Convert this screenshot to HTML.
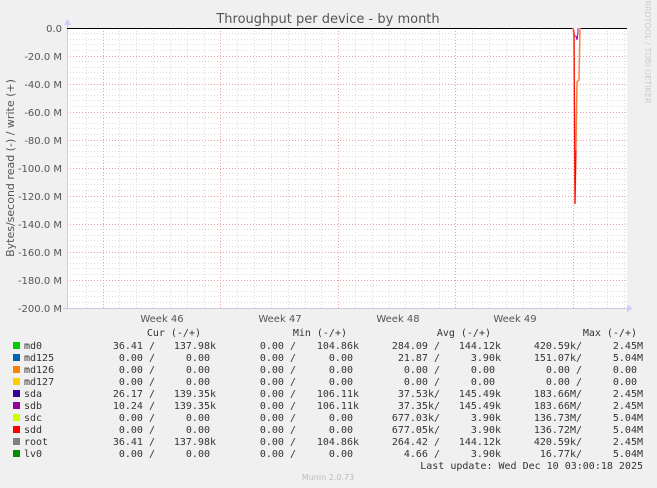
<!DOCTYPE html>
<html><head><style>
html,body{margin:0;padding:0;background:#f0f0f0;}
svg{display:block;}
text{font-family:"DejaVu Sans Mono","Liberation Mono",monospace;font-size:10px;fill:#333;}
.s{font-family:"DejaVu Sans","Liberation Sans",sans-serif;fill:#555;}
</style></head><body>
<svg width="657" height="488" xmlns="http://www.w3.org/2000/svg">
<rect width="657" height="488" fill="#f0f0f0"/>
<rect x="67" y="28" width="560" height="280" fill="#fff"/>
<g stroke="#ddd" stroke-dasharray="1,2" stroke-width="1">
<path d="M67 33.5H627M67 39.5H627M67 44.5H627M67 50.5H627M67 61.5H627M67 67.5H627M67 72.5H627M67 78.5H627M67 89.5H627M67 95.5H627M67 100.5H627M67 106.5H627M67 117.5H627M67 123.5H627M67 128.5H627M67 134.5H627M67 145.5H627M67 151.5H627M67 156.5H627M67 162.5H627M67 173.5H627M67 179.5H627M67 184.5H627M67 190.5H627M67 201.5H627M67 207.5H627M67 212.5H627M67 218.5H627M67 229.5H627M67 235.5H627M67 240.5H627M67 246.5H627M67 257.5H627M67 263.5H627M67 268.5H627M67 274.5H627M67 285.5H627M67 291.5H627M67 296.5H627M67 302.5H627"/>
<path d="M86.5 28V308M103.5 28V308M119.5 28V308M136.5 28V308M153.5 28V308M170.5 28V308M187.5 28V308M204.5 28V308M237.5 28V308M254.5 28V308M271.5 28V308M288.5 28V308M305.5 28V308M321.5 28V308M355.5 28V308M372.5 28V308M389.5 28V308M405.5 28V308M422.5 28V308M439.5 28V308M472.5 28V308M489.5 28V308M506.5 28V308M523.5 28V308M540.5 28V308M557.5 28V308M590.5 28V308M607.5 28V308M624.5 28V308"/>
</g>
<g stroke="#f0a0a0" stroke-dasharray="1,2" stroke-width="1">
<path d="M67 56.5H627M67 84.5H627M67 112.5H627M67 140.5H627M67 168.5H627M67 196.5H627M67 224.5H627M67 252.5H627M67 280.5H627"/>
<path d="M103.5 28V308M220.5 28V308M338.5 28V308M455.5 28V308M573.5 28V308"/>
</g>
<path d="M67.5 24V308M63 308.5H631" stroke="#ccd" stroke-width="1"/>
<path d="M64 25L67.5 19L71 25Z" fill="#ccf"/>
<path d="M627 305L633 308.5L627 312Z" fill="#ccf"/>
<path d="M67 28.5H574M580 28.5H627" stroke="#000" stroke-width="1"/>
<path d="M573 28L574 36L576 36L577 40L578 33L578 28" stroke="#990099" fill="none" stroke-width="1"/>
<path d="M573 28L574 34L575 204L577 82L579 80L580 28" stroke="#ff8040" fill="none" stroke-width="1.5"/>
<path d="M574 30L575 204L576 150" stroke="#ff0000" fill="none" stroke-width="1"/>
<text x="62" y="32" text-anchor="end" class="s">0.0</text>
<text x="62" y="60" text-anchor="end" class="s">-20.0 M</text>
<text x="62" y="88" text-anchor="end" class="s">-40.0 M</text>
<text x="62" y="116" text-anchor="end" class="s">-60.0 M</text>
<text x="62" y="144" text-anchor="end" class="s">-80.0 M</text>
<text x="62" y="172" text-anchor="end" class="s">-100.0 M</text>
<text x="62" y="200" text-anchor="end" class="s">-120.0 M</text>
<text x="62" y="228" text-anchor="end" class="s">-140.0 M</text>
<text x="62" y="256" text-anchor="end" class="s">-160.0 M</text>
<text x="62" y="284" text-anchor="end" class="s">-180.0 M</text>
<text x="62" y="312" text-anchor="end" class="s">-200.0 M</text>
<text x="162" y="322" text-anchor="middle" class="s">Week 46</text>
<text x="280" y="322" text-anchor="middle" class="s">Week 47</text>
<text x="398" y="322" text-anchor="middle" class="s">Week 48</text>
<text x="515" y="322" text-anchor="middle" class="s">Week 49</text>
<text x="328" y="23" text-anchor="middle" class="s" style="font-size:13px;fill:#555">Throughput per device - by month</text>
<text transform="translate(14,168) rotate(-90)" text-anchor="middle" class="s" style="font-size:11px">Bytes/second read (-) / write (+)</text>
<text transform="translate(645,52) rotate(90)" text-anchor="middle" class="s" style="font-size:8px;fill:#ccc">RRDTOOL / TOBI OETIKER</text>
<text x="328" y="480" text-anchor="middle" class="s" style="font-size:8px;fill:#bbb">Munin 2.0.73</text>
<text x="201" y="336" text-anchor="end">Cur (-/+)</text>
<text x="347" y="336" text-anchor="end">Min (-/+)</text>
<text x="491" y="336" text-anchor="end">Avg (-/+)</text>
<text x="637" y="336" text-anchor="end">Max (-/+)</text>
<g>
<rect x="13" y="342" width="7" height="7" fill="#00cc00"/><text x="24" y="349">md0</text>
<text x="155" y="349" text-anchor="end">36.41 /</text><text x="216" y="349" text-anchor="end">137.98k</text><text x="296" y="349" text-anchor="end">0.00 /</text><text x="359" y="349" text-anchor="end">104.86k</text><text x="440" y="349" text-anchor="end">284.09 /</text><text x="501" y="349" text-anchor="end">144.12k</text><text x="582" y="349" text-anchor="end">420.59k/</text><text x="643" y="349" text-anchor="end">2.45M</text>
<rect x="13" y="354" width="7" height="7" fill="#0066b3"/><text x="24" y="361">md125</text>
<text x="155" y="361" text-anchor="end">0.00 /</text><text x="210" y="361" text-anchor="end">0.00</text><text x="296" y="361" text-anchor="end">0.00 /</text><text x="353" y="361" text-anchor="end">0.00</text><text x="440" y="361" text-anchor="end">21.87 /</text><text x="501" y="361" text-anchor="end">3.90k</text><text x="582" y="361" text-anchor="end">151.07k/</text><text x="643" y="361" text-anchor="end">5.04M</text>
<rect x="13" y="366" width="7" height="7" fill="#ff8000"/><text x="24" y="373">md126</text>
<text x="155" y="373" text-anchor="end">0.00 /</text><text x="210" y="373" text-anchor="end">0.00</text><text x="296" y="373" text-anchor="end">0.00 /</text><text x="353" y="373" text-anchor="end">0.00</text><text x="440" y="373" text-anchor="end">0.00 /</text><text x="495" y="373" text-anchor="end">0.00</text><text x="582" y="373" text-anchor="end">0.00 /</text><text x="637" y="373" text-anchor="end">0.00</text>
<rect x="13" y="378" width="7" height="7" fill="#ffcc00"/><text x="24" y="385">md127</text>
<text x="155" y="385" text-anchor="end">0.00 /</text><text x="210" y="385" text-anchor="end">0.00</text><text x="296" y="385" text-anchor="end">0.00 /</text><text x="353" y="385" text-anchor="end">0.00</text><text x="440" y="385" text-anchor="end">0.00 /</text><text x="495" y="385" text-anchor="end">0.00</text><text x="582" y="385" text-anchor="end">0.00 /</text><text x="637" y="385" text-anchor="end">0.00</text>
<rect x="13" y="390" width="7" height="7" fill="#330099"/><text x="24" y="397">sda</text>
<text x="155" y="397" text-anchor="end">26.17 /</text><text x="216" y="397" text-anchor="end">139.35k</text><text x="296" y="397" text-anchor="end">0.00 /</text><text x="359" y="397" text-anchor="end">106.11k</text><text x="440" y="397" text-anchor="end">37.53k/</text><text x="501" y="397" text-anchor="end">145.49k</text><text x="582" y="397" text-anchor="end">183.66M/</text><text x="643" y="397" text-anchor="end">2.45M</text>
<rect x="13" y="402" width="7" height="7" fill="#990099"/><text x="24" y="409">sdb</text>
<text x="155" y="409" text-anchor="end">10.24 /</text><text x="216" y="409" text-anchor="end">139.35k</text><text x="296" y="409" text-anchor="end">0.00 /</text><text x="359" y="409" text-anchor="end">106.11k</text><text x="440" y="409" text-anchor="end">37.35k/</text><text x="501" y="409" text-anchor="end">145.49k</text><text x="582" y="409" text-anchor="end">183.66M/</text><text x="643" y="409" text-anchor="end">2.45M</text>
<rect x="13" y="414" width="7" height="7" fill="#ccff00"/><text x="24" y="421">sdc</text>
<text x="155" y="421" text-anchor="end">0.00 /</text><text x="210" y="421" text-anchor="end">0.00</text><text x="296" y="421" text-anchor="end">0.00 /</text><text x="353" y="421" text-anchor="end">0.00</text><text x="440" y="421" text-anchor="end">677.03k/</text><text x="501" y="421" text-anchor="end">3.90k</text><text x="582" y="421" text-anchor="end">136.73M/</text><text x="643" y="421" text-anchor="end">5.04M</text>
<rect x="13" y="426" width="7" height="7" fill="#ff0000"/><text x="24" y="433">sdd</text>
<text x="155" y="433" text-anchor="end">0.00 /</text><text x="210" y="433" text-anchor="end">0.00</text><text x="296" y="433" text-anchor="end">0.00 /</text><text x="353" y="433" text-anchor="end">0.00</text><text x="440" y="433" text-anchor="end">677.05k/</text><text x="501" y="433" text-anchor="end">3.90k</text><text x="582" y="433" text-anchor="end">136.72M/</text><text x="643" y="433" text-anchor="end">5.04M</text>
<rect x="13" y="438" width="7" height="7" fill="#808080"/><text x="24" y="445">root</text>
<text x="155" y="445" text-anchor="end">36.41 /</text><text x="216" y="445" text-anchor="end">137.98k</text><text x="296" y="445" text-anchor="end">0.00 /</text><text x="359" y="445" text-anchor="end">104.86k</text><text x="440" y="445" text-anchor="end">264.42 /</text><text x="501" y="445" text-anchor="end">144.12k</text><text x="582" y="445" text-anchor="end">420.59k/</text><text x="643" y="445" text-anchor="end">2.45M</text>
<rect x="13" y="450" width="7" height="7" fill="#008f00"/><text x="24" y="457">lv0</text>
<text x="155" y="457" text-anchor="end">0.00 /</text><text x="210" y="457" text-anchor="end">0.00</text><text x="296" y="457" text-anchor="end">0.00 /</text><text x="353" y="457" text-anchor="end">0.00</text><text x="440" y="457" text-anchor="end">4.66 /</text><text x="501" y="457" text-anchor="end">3.90k</text><text x="582" y="457" text-anchor="end">16.77k/</text><text x="643" y="457" text-anchor="end">5.04M</text>
<text x="643" y="469" text-anchor="end">Last update: Wed Dec 10 03:00:18 2025</text>
</g>
</svg>
</body></html>
